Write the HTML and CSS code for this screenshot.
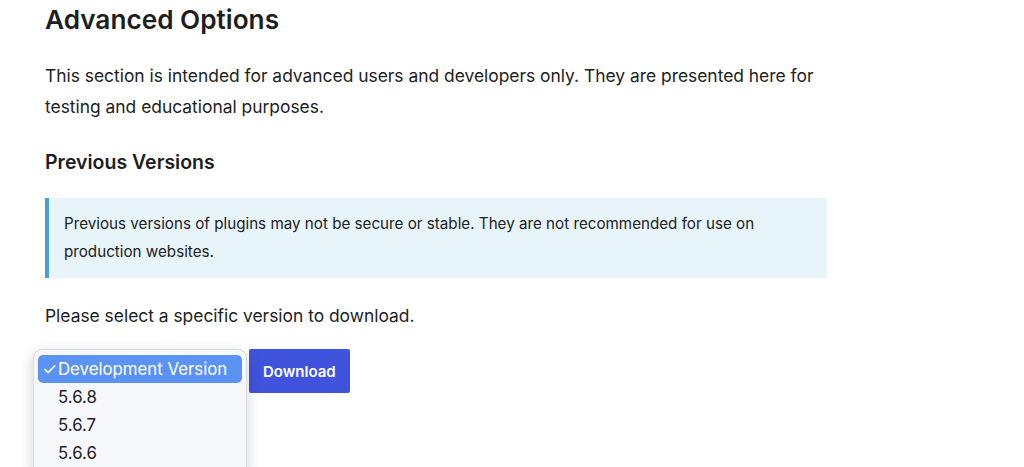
FILE: index.html
```html
<!DOCTYPE html>
<html lang="en">
<head>
<meta charset="utf-8">
<title>Advanced Options</title>
<link rel="stylesheet" href="styles.css">
</head>
<body>
<main class="section">
  <h1 class="title">Advanced Options</h1>
  <p class="lead">This section is intended for advanced users and developers only. They are presented here for testing and educational purposes.</p>

  <h2 class="subtitle">Previous Versions</h2>
  <div class="notice">
    <p>Previous versions of plugins may not be secure or stable. They are not recommended for use on production websites.</p>
  </div>

  <p class="lead">Please select a specific version to download.</p>

  <form class="download-row">
    <div class="select">
      <ul class="select-menu">
        <li class="option is-selected"><span class="check">✓</span>Development Version</li>
        <li class="option">5.6.8</li>
        <li class="option">5.6.7</li>
        <li class="option">5.6.6</li>
      </ul>
    </div>
    <button type="button" class="button">Download</button>
  </form>
</main>
</body>
</html>
```

FILE: styles.css
```css
* {
  box-sizing: border-box;
}

html,
body {
  margin: 0;
  background: #ffffff;
}

body {
  min-height: 100vh;
  font-family: "Inter", "Noto Sans", sans-serif;
  color: #222222;
}

.section {
  padding: 2px 0 0 45px;
  width: 827px;
  height: 467px;
  overflow: hidden;
}

.title {
  margin: 0;
  font-size: 26.2px;
  line-height: 36px;
  font-weight: 600;
  color: #1e1e1e;
}

.lead {
  margin: 22px 0 0;
  font-size: 17.4px;
  line-height: 31px;
}

.subtitle {
  margin: 26px 0 0;
  font-size: 19.5px;
  line-height: 28px;
  font-weight: 600;
  color: #1e1e1e;
}

.notice {
  margin-top: 22px;
  background: #e7f4fa;
  border-left: 4px solid #4aa0d5;
  padding: 12px 15px;
}

.notice p {
  margin: 0;
  font-size: 15.2px;
  line-height: 28px;
}

.download-row {
  display: flex;
  align-items: flex-start;
  gap: 8px;
  margin-top: 18px;
}

.select {
  position: relative;
  width: 196px;
  height: 44px;
}

.select-menu {
  position: absolute;
  top: 0;
  left: -12px;
  width: 214px;
  margin: 0;
  padding: 5px 4px 8px;
  list-style: none;
  background: #f6f8fc;
  border: 1px solid #d9dce2;
  border-radius: 9px;
  box-shadow: 0 4px 14px rgba(0, 0, 0, 0.18);
}

.option {
  position: relative;
  height: 28px;
  padding-left: 20px;
  font-size: 16.8px;
  line-height: 28px;
  color: #222;
  border-radius: 5px;
}

.option.is-selected {
  background: #5b93f5;
  color: #ffffff;
}

.check {
  position: absolute;
  left: 4px;
  top: 0;
  font-size: 17px;
}

.button {
  height: 44px;
  padding: 0 14px;
  border: 0;
  border-radius: 2px;
  background: #4053dd;
  color: #ffffff;
  font-family: inherit;
  font-size: 15px;
  font-weight: 600;
  cursor: pointer;
}
```
